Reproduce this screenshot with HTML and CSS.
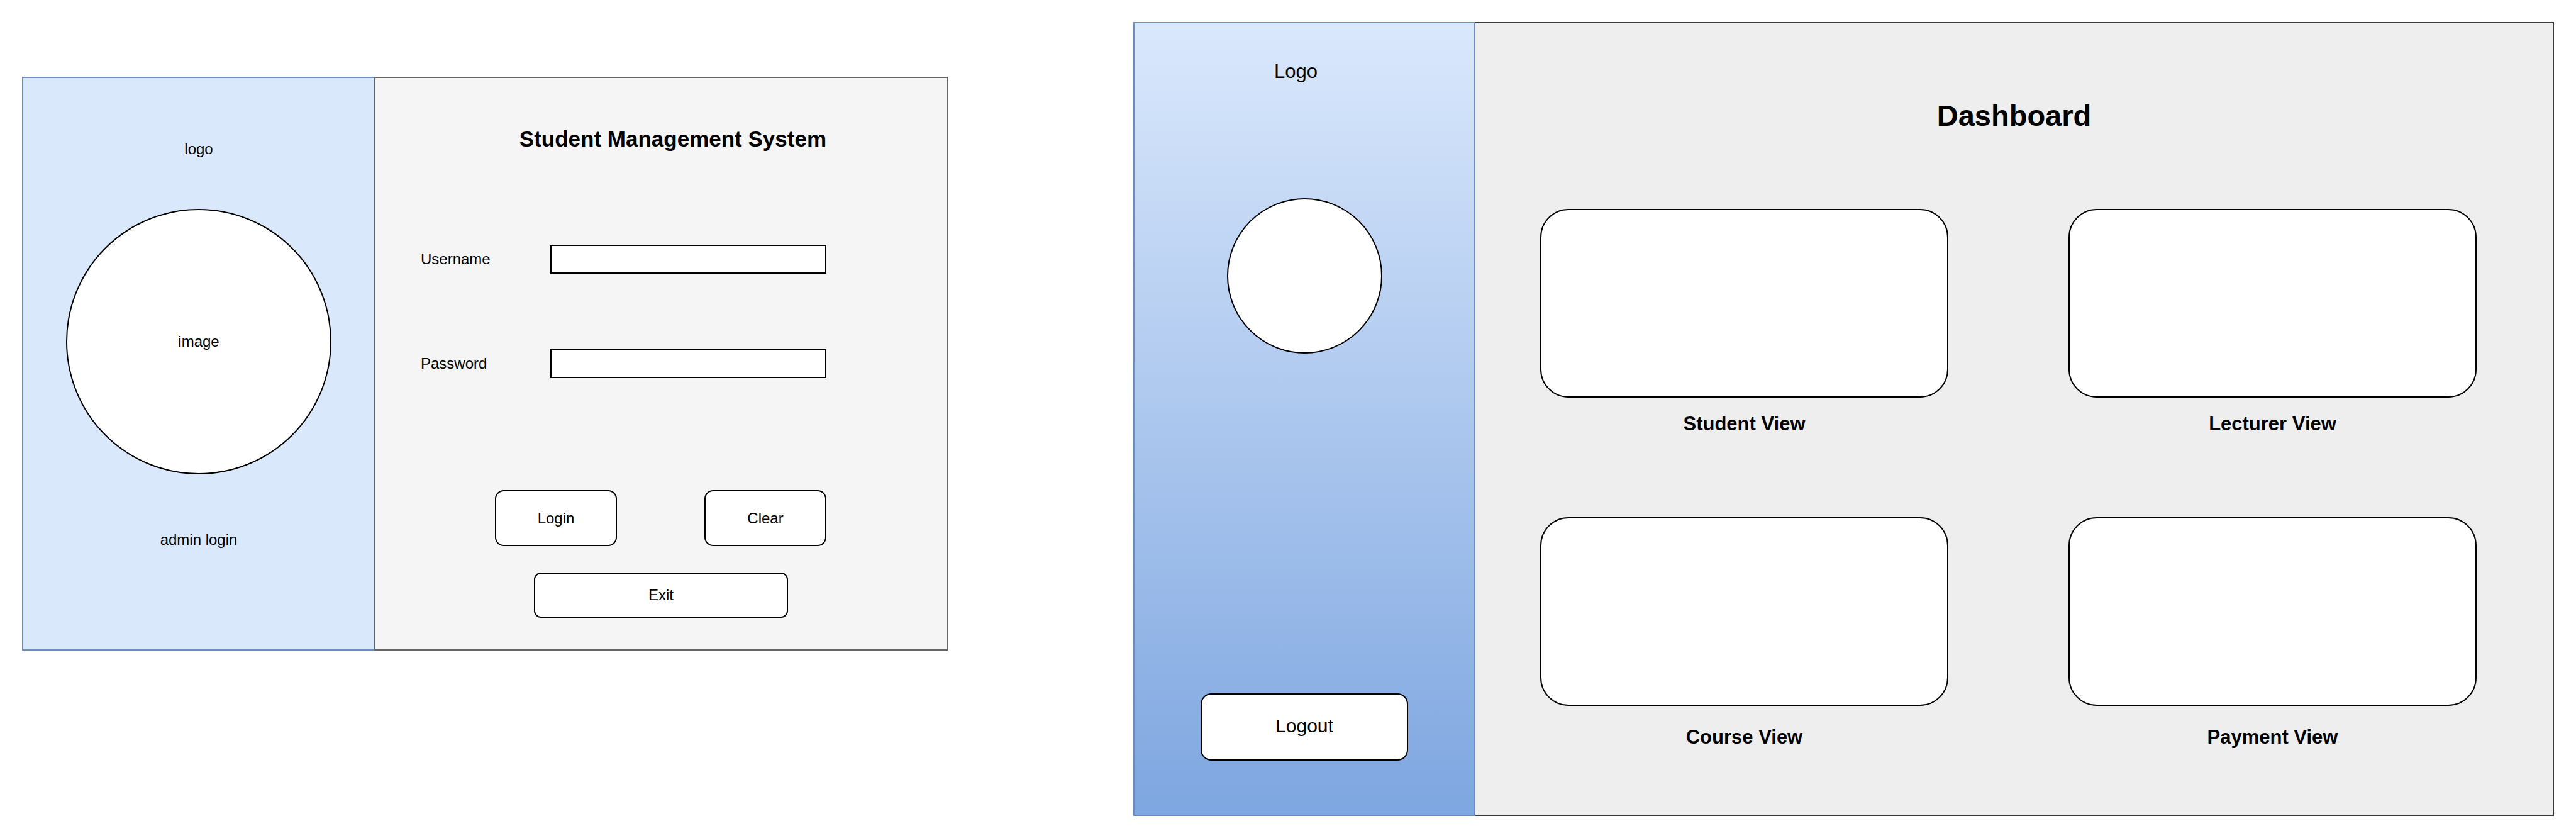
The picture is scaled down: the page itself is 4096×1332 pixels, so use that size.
FILE: index.html
```html
<!DOCTYPE html>
<html lang="en">
<head>
<meta charset="utf-8">
<title>Student Management System</title>
<link rel="stylesheet" href="styles.css">
</head>
<body>
<div class="screens">
  <section class="login">
    <aside class="login-side">
      <p class="login-logo">logo</p>
      <div class="login-image">image</div>
      <p class="login-role">admin login</p>
    </aside>
    <form class="login-form">
      <h1 class="login-title">Student Management System</h1>
      <div class="field">
        <label for="username">Username</label>
        <input class="field-input" id="username" type="text">
      </div>
      <div class="field">
        <label for="password">Password</label>
        <input class="field-input" id="password" type="password">
      </div>
      <div class="actions">
        <button class="button" type="submit">Login</button>
        <button class="button" type="reset">Clear</button>
      </div>
      <button class="button button-exit" type="button">Exit</button>
    </form>
  </section>

  <section class="dashboard">
    <aside class="dash-side">
      <p class="dash-logo">Logo</p>
      <div class="avatar"></div>
      <button class="button button-logout" type="button">Logout</button>
    </aside>
    <main class="dash-main">
      <h2 class="dash-title">Dashboard</h2>
      <div class="cards">
        <article class="view">
          <div class="card"></div>
          <h3 class="view-name">Student View</h3>
        </article>
        <article class="view">
          <div class="card"></div>
          <h3 class="view-name">Lecturer View</h3>
        </article>
      </div>
      <div class="cards cards-lower">
        <article class="view">
          <div class="card"></div>
          <h3 class="view-name">Course View</h3>
        </article>
        <article class="view">
          <div class="card"></div>
          <h3 class="view-name">Payment View</h3>
        </article>
      </div>
    </main>
  </section>
</div>
</body>
</html>
```
FILE: styles.css
```css
*,
*::before,
*::after {
  box-sizing: border-box;
}

body {
  margin: 0;
  background: #fff;
  color: #000;
  font-family: "Liberation Sans", Arial, Helvetica, sans-serif;
  font-size: 24px;
  line-height: 30px;
}

h1,
h2,
h3,
p {
  margin: 0;
}

.screens {
  display: grid;
  grid-template-columns: 1472fr 2259fr;
  column-gap: 295px;
  align-items: start;
  padding: 35px;
}

/* Login screen */

.login {
  display: grid;
  grid-template-columns: 560fr 912fr;
  margin-top: 87px;
}

.login-side {
  display: flex;
  flex-direction: column;
  align-items: center;
  padding-top: 98px;
  border: 2px solid #6c8ebf;
  border-right: 0;
  background: #dae8fc;
}

.login-image {
  display: flex;
  align-items: center;
  justify-content: center;
  width: 422px;
  height: 422px;
  margin: 80px 0 89px;
  border: 2px solid #000;
  border-radius: 50%;
  background: #fff;
}

.login-form {
  display: flex;
  flex-direction: column;
  padding: 77px 191px 50px 72px;
  border: 2px solid #666;
  background: #f5f5f5;
}

.login-title {
  margin-bottom: 148px;
  font-size: 35px;
  line-height: 40px;
  text-align: right;
}

.field {
  display: grid;
  grid-template-columns: 206fr 439fr;
  align-items: center;
}

.field + .field {
  margin-top: 120px;
}

.field-input {
  width: 100%;
  height: 46px;
  padding: 0 8px;
  border: 2px solid #000;
  border-radius: 0;
  background: #fff;
  font: inherit;
}

.actions {
  display: flex;
  justify-content: space-between;
  margin: 178px 0 42px 118px;
}

.button {
  width: 194px;
  height: 89px;
  padding: 0;
  border: 2px solid #000;
  border-radius: 14px;
  background: #fff;
  color: inherit;
  font: inherit;
}

.button-exit {
  align-self: flex-end;
  width: 404px;
  height: 72px;
  margin-right: 61px;
  border-radius: 11px;
}

/* Dashboard screen */

.dashboard {
  display: grid;
  grid-template-columns: 544fr 1715fr;
}

.dash-side {
  display: flex;
  flex-direction: column;
  align-items: center;
  padding: 59px 0 86px;
  border: 2px solid #6c8ebf;
  background: linear-gradient(#dae8fc, #7ea6e0);
}

.dash-logo {
  padding-right: 27px;
  font-size: 31px;
  line-height: 36px;
}

.avatar {
  width: 247px;
  height: 247px;
  margin: 183px 0 540px;
  border: 2px solid #000;
  border-radius: 50%;
  background: #fff;
}

.button-logout {
  width: 330px;
  height: 107px;
  padding-bottom: 4px;
  border-radius: 17px;
  font-size: 30px;
}

.dash-main {
  padding-top: 120px;
  border: 2px solid #36393d;
  border-left: 0;
  background: #eee;
}

.dash-title {
  font-size: 47px;
  line-height: 54px;
  text-align: center;
}

.cards {
  display: grid;
  grid-template-columns: 1fr 1fr;
  column-gap: 191px;
  margin-top: 121px;
  padding: 0 121px 0 103px;
}

.cards-lower {
  margin-top: 130px;
}

.view {
  display: grid;
  row-gap: 24px;
}

.cards-lower .view {
  row-gap: 32px;
}

.card {
  height: 300px;
  border: 2px solid #000;
  border-radius: 45px;
  background: #fff;
}

.view-name {
  font-size: 31px;
  line-height: 36px;
  text-align: center;
}
```
